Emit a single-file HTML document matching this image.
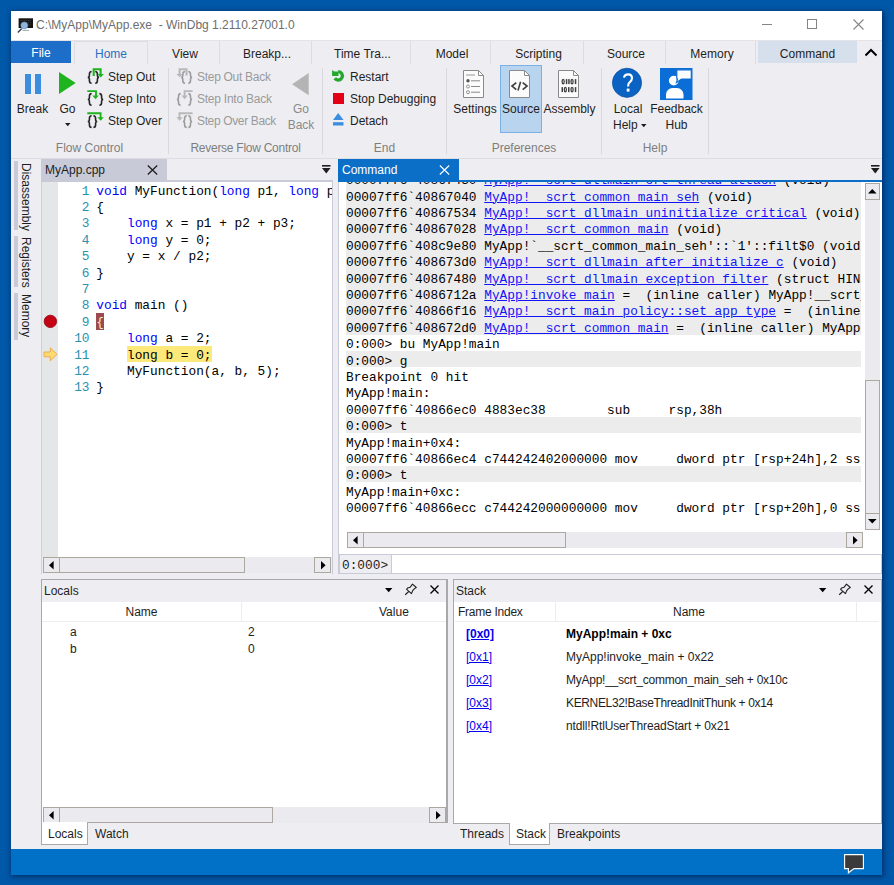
<!DOCTYPE html>
<html><head><meta charset="utf-8">
<style>
*{margin:0;padding:0;box-sizing:border-box}
html,body{width:894px;height:885px;overflow:hidden;background:#0058a8;font-family:"Liberation Sans",sans-serif;font-size:12px;color:#1e1e1e}
.a{position:absolute}
.t{position:absolute;white-space:pre;line-height:14px}
.c{text-align:center}
.mono{font-family:"Liberation Mono",monospace;font-size:12.8px}
.sep{position:absolute;width:1px;background:#d8d8de}
.tabsep{position:absolute;top:41px;width:1px;height:23px;background:#dcdce2}
.gl{position:absolute;top:140.7px;color:#7e7e7e;white-space:pre;line-height:14px;text-align:center}
svg{position:absolute;overflow:visible}
.cl{position:absolute;left:0;width:518px;height:16.4px}
.ct{position:absolute;left:0;top:2.6px;line-height:16.4px;white-space:pre;font-family:"Liberation Mono",monospace;font-size:12.8px;color:#000}
.ct u{color:#1414f8;text-decoration-thickness:1px;text-underline-offset:1px}

</style></head><body>
<div class="a" style="left:11px;top:11px;width:871px;height:864px;background:#eeeef2;box-shadow:1px 1px 5px 1px rgba(0,20,60,.55)"></div>
<!-- title bar -->
<div class="a" style="left:11px;top:11px;width:871px;height:29px;background:#fff"></div>
<div class="a" style="left:11px;top:40px;width:871px;height:1px;background:#e4e4e8"></div>
<div class="t" style="left:36px;top:18px;color:#6e6e6e">C:\MyApp\MyApp.exe&nbsp; - WinDbg 1.2110.27001.0</div>
<svg style="left:14px;top:14px" width="24" height="24"><rect x="4.6" y="4.3" width="14.4" height="9.7" fill="#141414"/><path d="M6.5 6.5H17M6.5 8.7H17M6.5 10.9H17" stroke="#555" stroke-width=".6" stroke-dasharray="1.2 .6"/><path d="M8.5 16.4H15" stroke="#9aa" stroke-width="1"/><path d="M3.8 18.5L7.8 14.5" stroke="#3a4a5a" stroke-width="1.6"/><circle cx="10.3" cy="11.4" r="3.5" fill="#8fb6dc" stroke="#6a8fb4" stroke-width=".6"/></svg>
<!-- window controls -->
<div class="a" style="left:762px;top:24px;width:10px;height:1px;background:#858585"></div>
<div class="a" style="left:807px;top:19px;width:10px;height:10px;border:1px solid #858585"></div>
<svg style="left:853px;top:19px" width="11" height="11"><path d="M0.5 0.5L10.5 10.5M10.5 0.5L0.5 10.5" stroke="#858585" stroke-width="1.1"/></svg>
<!-- ribbon tabs -->
<div class="a" style="left:11px;top:41px;width:60px;height:22px;background:#1c6ec8"></div>
<div class="t c" style="left:11px;top:46px;width:60px;color:#fff">File</div>
<div class="a" style="left:74px;top:41px;width:74px;height:23px;background:#eeeef2;border:1px solid #dcdce2;border-bottom:none"></div>
<div class="t c" style="left:74px;top:47px;width:74px;color:#2b6fc0">Home</div>
<div class="tabsep" style="left:219px"></div>
<div class="tabsep" style="left:311px"></div>
<div class="tabsep" style="left:410px"></div>
<div class="tabsep" style="left:490px"></div>
<div class="tabsep" style="left:583px"></div>
<div class="tabsep" style="left:665px"></div>
<div class="tabsep" style="left:755px"></div>
<div class="t c" style="left:149.5px;top:47px;width:71px">View</div>
<div class="t c" style="left:221.5px;top:47px;width:91px">Breakp...</div>
<div class="t c" style="left:313.5px;top:47px;width:98px">Time Tra...</div>
<div class="t c" style="left:412.5px;top:47px;width:79px">Model</div>
<div class="t c" style="left:492.5px;top:47px;width:92px">Scripting</div>
<div class="t c" style="left:585.5px;top:47px;width:81px">Source</div>
<div class="t c" style="left:667.5px;top:47px;width:89px">Memory</div>
<div class="a" style="left:758px;top:41px;width:99px;height:22px;background:#d6e0ec"></div>
<div class="t c" style="left:758px;top:47px;width:99px">Command</div>
<svg style="left:864px;top:48px" width="14" height="9"><path d="M1.5 7.5L7 2L12.5 7.5" stroke="#000" stroke-width="2" fill="none"/></svg>
<!-- ribbon body -->
<!-- Flow control -->
<div class="a" style="left:25px;top:74px;width:6px;height:20px;background:#3b8de0"></div>
<div class="a" style="left:35px;top:74px;width:6px;height:20px;background:#3b8de0"></div>
<div class="t c" style="left:12px;top:102px;width:41px">Break</div>
<svg style="left:59px;top:72px" width="17" height="22"><path d="M0 0L16.7 11L0 22Z" fill="#1fb31f"/></svg>
<div class="t c" style="left:55px;top:102px;width:25px">Go</div>
<svg style="left:65px;top:123px" width="6" height="4"><path d="M0 0H5.5L2.75 3.2Z" fill="#1e1e1e"/></svg>
<!-- step icons -->
<svg style="left:0;top:0" width="894" height="160"><path d="M91.6 71.5C89.6 71.5 89.39999999999999 72.5 89.39999999999999 74.2V75.8C89.39999999999999 76.8 88.8 77.3 87.8 77.35C88.8 77.4 89.39999999999999 77.9 89.39999999999999 78.9V80.5C89.39999999999999 82.2 89.6 83.2 91.6 83.2" stroke="#262626" stroke-width="1.6" fill="none"/><path d="M95.2 71.5C97.2 71.5 97.4 72.5 97.4 74.2V75.8C97.4 76.8 98.0 77.3 99.0 77.35C98.0 77.4 97.4 77.9 97.4 78.9V80.5C97.4 82.2 97.2 83.2 95.2 83.2" stroke="#262626" stroke-width="1.6" fill="none"/><path d="M93.7 76V69.2H100.6V74.5" stroke="#1fb31f" stroke-width="2.1" fill="none"/><path d="M97.4 74H103.9L100.65 77.4Z" fill="#1fb31f"/><path d="M91.6 93.6C89.6 93.6 89.39999999999999 94.6 89.39999999999999 96.3V97.89999999999999C89.39999999999999 98.89999999999999 88.8 99.39999999999999 87.8 99.44999999999999C88.8 99.5 89.39999999999999 100.0 89.39999999999999 101.0V102.6C89.39999999999999 104.3 89.6 105.3 91.6 105.3" stroke="#262626" stroke-width="1.6" fill="none"/><path d="M99.4 93.6C101.4 93.6 101.60000000000001 94.6 101.60000000000001 96.3V97.89999999999999C101.60000000000001 98.89999999999999 102.2 99.39999999999999 103.2 99.44999999999999C102.2 99.5 101.60000000000001 100.0 101.60000000000001 101.0V102.6C101.60000000000001 104.3 101.4 105.3 99.4 105.3" stroke="#262626" stroke-width="1.6" fill="none"/><path d="M87.3 91.1H96V96.5" stroke="#1fb31f" stroke-width="1.9" fill="none"/><path d="M92.3 95.6H98.8L95.55 99.3Z" fill="#1fb31f"/><path d="M91.6 115.7C89.6 115.7 89.39999999999999 116.7 89.39999999999999 118.4V120.0C89.39999999999999 121.0 88.8 121.5 87.8 121.55C88.8 121.60000000000001 89.39999999999999 122.10000000000001 89.39999999999999 123.10000000000001V124.7C89.39999999999999 126.4 89.6 127.4 91.6 127.4" stroke="#262626" stroke-width="1.6" fill="none"/><path d="M93.4 115.7C95.4 115.7 95.60000000000001 116.7 95.60000000000001 118.4V120.0C95.60000000000001 121.0 96.2 121.5 97.2 121.55C96.2 121.60000000000001 95.60000000000001 122.10000000000001 95.60000000000001 123.10000000000001V124.7C95.60000000000001 126.4 95.4 127.4 93.4 127.4" stroke="#262626" stroke-width="1.6" fill="none"/><path d="M87.3 113.2H100.6V118" stroke="#1fb31f" stroke-width="1.9" fill="none"/><path d="M97.4 117.3H103.9L100.65 120.8Z" fill="#1fb31f"/></svg>
<div class="t" style="left:108px;top:70px">Step Out</div>
<div class="t" style="left:108px;top:92px">Step Into</div>
<div class="t" style="left:108px;top:114px">Step Over</div>
<div class="gl" style="left:11px;width:157px">Flow Control</div>
<div class="sep" style="left:168px;top:68px;height:86px"></div>
<!-- reverse flow -->
<svg style="left:0;top:0" width="894" height="160"><path d="M185 71.5C183 71.5 182.8 72.5 182.8 74.2V75.8C182.8 76.8 182.2 77.3 181.2 77.35C182.2 77.4 182.8 77.9 182.8 78.9V80.5C182.8 82.2 183 83.2 185 83.2" stroke="#9c9c9c" stroke-width="1.6" fill="none"/><path d="M188.3 71.5C190.3 71.5 190.5 72.5 190.5 74.2V75.8C190.5 76.8 191.10000000000002 77.3 192.10000000000002 77.35C191.10000000000002 77.4 190.5 77.9 190.5 78.9V80.5C190.5 82.2 190.3 83.2 188.3 83.2" stroke="#9c9c9c" stroke-width="1.6" fill="none"/><path d="M186.5 75.5V69.2H179.6V74.5" stroke="#b8b8b8" stroke-width="2.1" fill="none"/><path d="M176.4 74H182.9L179.65 77.2Z" fill="#b8b8b8"/><path d="M180.7 93.6C178.7 93.6 178.5 94.6 178.5 96.3V97.89999999999999C178.5 98.89999999999999 177.89999999999998 99.39999999999999 176.89999999999998 99.44999999999999C177.89999999999998 99.5 178.5 100.0 178.5 101.0V102.6C178.5 104.3 178.7 105.3 180.7 105.3" stroke="#9c9c9c" stroke-width="1.6" fill="none"/><path d="M188.3 93.6C190.3 93.6 190.5 94.6 190.5 96.3V97.89999999999999C190.5 98.89999999999999 191.10000000000002 99.39999999999999 192.10000000000002 99.44999999999999C191.10000000000002 99.5 190.5 100.0 190.5 101.0V102.6C190.5 104.3 190.3 105.3 188.3 105.3" stroke="#9c9c9c" stroke-width="1.6" fill="none"/><path d="M192.6 91.1H184.6V96.5" stroke="#b8b8b8" stroke-width="1.9" fill="none"/><path d="M181.4 95.6H187.8L184.6 99.3Z" fill="#b8b8b8"/><path d="M186.8 115.7C184.8 115.7 184.60000000000002 116.7 184.60000000000002 118.4V120.0C184.60000000000002 121.0 184.0 121.5 183.0 121.55C184.0 121.60000000000001 184.60000000000002 122.10000000000001 184.60000000000002 123.10000000000001V124.7C184.60000000000002 126.4 184.8 127.4 186.8 127.4" stroke="#9c9c9c" stroke-width="1.6" fill="none"/><path d="M188.3 115.7C190.3 115.7 190.5 116.7 190.5 118.4V120.0C190.5 121.0 191.10000000000002 121.5 192.10000000000002 121.55C191.10000000000002 121.60000000000001 190.5 122.10000000000001 190.5 123.10000000000001V124.7C190.5 126.4 190.3 127.4 188.3 127.4" stroke="#9c9c9c" stroke-width="1.6" fill="none"/><path d="M192.6 113.2H179.5V118" stroke="#b8b8b8" stroke-width="1.9" fill="none"/><path d="M176.4 117.3H182.7L179.55 120.8Z" fill="#b8b8b8"/></svg>
<div class="t" style="left:197px;top:70px;color:#9a9a9a;letter-spacing:-0.29px">Step Out Back</div>
<div class="t" style="left:197px;top:92px;color:#9a9a9a;letter-spacing:-0.24px">Step Into Back</div>
<div class="t" style="left:197px;top:114px;color:#9a9a9a;letter-spacing:-0.36px">Step Over Back</div>
<svg style="left:292px;top:73px" width="17" height="23"><path d="M16.7 0V22.3L0 11.15Z" fill="#b4b4b4"/></svg>
<div class="t c" style="left:285px;top:102px;width:32px;color:#8a8a8a">Go</div>
<div class="t c" style="left:285px;top:118px;width:32px;color:#8a8a8a">Back</div>
<div class="gl" style="left:169px;width:153px;letter-spacing:-0.26px">Reverse Flow Control</div>
<div class="sep" style="left:322px;top:68px;height:86px"></div>
<!-- End -->
<svg style="left:331px;top:70px" width="14" height="13"><path d="M3.76 8.31A4.2 4.2 0 1 0 7.2 1.7" stroke="#22a82a" stroke-width="3.3" fill="none"/><path d="M1.1 0L3.2 1.6H7.5V5.9H1.1Z" fill="#22a82a"/></svg>
<div class="a" style="left:333px;top:93px;width:10.5px;height:10.5px;background:#e30016"></div>
<svg style="left:333px;top:113px" width="11" height="13"><path d="M5.2 0L10.5 7H0Z" fill="#3b8de0"/><rect x="0" y="9.2" width="10.5" height="3.3" fill="#3b8de0"/></svg>
<div class="t" style="left:350px;top:70px">Restart</div>
<div class="t" style="left:350px;top:92px">Stop Debugging</div>
<div class="t" style="left:350px;top:114px">Detach</div>
<div class="gl" style="left:323px;width:123px">End</div>
<div class="sep" style="left:446px;top:68px;height:86px"></div>
<!-- Preferences -->
<div class="a" style="left:500px;top:65px;width:42px;height:68px;background:#b9d4ee;border:1px solid #7ab0e4"></div>
<svg style="left:463px;top:70px" width="22" height="29"><path d="M0.5 0.5H15.5L20.5 5.5V27.5H0.5Z" fill="#fbfbfb" stroke="#8a8a8a"/><path d="M15.5 0.5V5.5H20.5" fill="none" stroke="#8a8a8a"/><path d="M3 5H12" stroke="#9a9a9a"/><circle cx="5" cy="10.8" r="1.7" fill="#555"/><path d="M8 10.8H17" stroke="#888"/><circle cx="5" cy="16.5" r="1.5" fill="none" stroke="#888" stroke-width=".9"/><path d="M8 16.5H17" stroke="#888"/><circle cx="5" cy="22.2" r="1.5" fill="none" stroke="#888" stroke-width=".9"/><path d="M8 22.2H17" stroke="#888"/></svg>
<svg style="left:509px;top:70px" width="22" height="29"><path d="M0.5 0.5H15.5L20.5 5.5V27.5H0.5Z" fill="#fbfbfb" stroke="#8a8a8a"/><path d="M15.5 0.5V5.5H20.5" fill="none" stroke="#8a8a8a"/><path d="M7.3 12.6L3 16.1L7.3 19.6M13.7 12.6L18 16.1L13.7 19.6" transform="translate(0,0)" fill="none" stroke="#404040" stroke-width="1.7"/><path d="M11.6 11.8L9 20.4" stroke="#404040" stroke-width="1.6"/></svg>
<svg style="left:558px;top:70px" width="22" height="29"><path d="M0.5 0.5H15.5L20.5 5.5V27.5H0.5Z" fill="#fbfbfb" stroke="#8a8a8a"/><path d="M15.5 0.5V5.5H20.5" fill="none" stroke="#8a8a8a"/><ellipse cx="5.15" cy="11.55" rx="1.05" ry="2.2" fill="none" stroke="#404040" stroke-width="1.3"/><rect x="7.8" y="9.1" width="1.5" height="5" fill="#404040"/><rect x="10.2" y="9.1" width="1.5" height="5" fill="#404040"/><ellipse cx="14.05" cy="11.55" rx="1.05" ry="2.2" fill="none" stroke="#404040" stroke-width="1.3"/><rect x="16.8" y="9.1" width="1.5" height="5" fill="#404040"/><rect x="3.5" y="17.1" width="1.5" height="5" fill="#404040"/><ellipse cx="7.35" cy="19.55" rx="1.05" ry="2.2" fill="none" stroke="#404040" stroke-width="1.3"/><rect x="10.0" y="17.1" width="1.5" height="5" fill="#404040"/><ellipse cx="14.05" cy="19.55" rx="1.05" ry="2.2" fill="none" stroke="#404040" stroke-width="1.3"/><rect x="16.8" y="17.1" width="1.5" height="5" fill="#404040"/></svg>
<div class="t c" style="left:450px;top:102px;width:50px">Settings</div>
<div class="t c" style="left:500px;top:102px;width:42px">Source</div>
<div class="t c" style="left:542px;top:102px;width:55px">Assembly</div>
<div class="gl" style="left:447px;width:154px">Preferences</div>
<div class="sep" style="left:601px;top:68px;height:86px"></div>
<!-- Help -->
<svg style="left:612px;top:68px" width="31" height="31"><circle cx="15" cy="14.8" r="14.6" fill="#0a62c2" stroke="#0a4f9c" stroke-width="0.7"/><path d="M12 9.6C12.4 7.4 14.2 6.4 16.1 6.4C18.6 6.4 20 8 20 10.2C20 12.4 18.6 13.4 17.4 14.5C16.4 15.4 16.1 16.4 16.1 18.6" fill="none" stroke="#fff" stroke-width="2.1"/><rect x="14.7" y="20.6" width="2.8" height="3" fill="#fff"/></svg>
<svg style="left:660px;top:68px" width="33" height="32"><rect width="32.5" height="32" fill="#0a6ed6"/><circle cx="13.8" cy="12.6" r="5.6" fill="#fff" stroke="#0a6ed6" stroke-width="1.4"/><path d="M16.8 1.8H31.3V11H21.5L16.5 14.5L17.5 11H16.8Z" fill="#fff" stroke="#0a6ed6" stroke-width="1.2"/><path d="M6 30.5V26.5A6.5 6.5 0 0 1 12.5 20H17A6.5 6.5 0 0 1 23.5 26.5V30.5Z" fill="#fff"/></svg>
<div class="t c" style="left:603px;top:102px;width:50px">Local</div>
<div class="t" style="left:613px;top:118px">Help</div>
<svg style="left:641px;top:124px" width="6" height="4"><path d="M0 0H5.5L2.75 3.2Z" fill="#1e1e1e"/></svg>
<div class="t c" style="left:650px;top:102px;width:53px">Feedback</div>
<div class="t c" style="left:650px;top:118px;width:53px">Hub</div>
<div class="gl" style="left:602px;width:106px">Help</div>
<div class="sep" style="left:708px;top:68px;height:86px"></div>

<div class="a" style="left:11px;top:158px;width:871px;height:1px;background:#dcdce2"></div>

<!-- left sidebar -->
<div class="a" style="left:14px;top:161px;width:3.5px;height:69px;background:#c9cad8"></div>
<div class="a" style="left:14px;top:236px;width:3.5px;height:51px;background:#c9cad8"></div>
<div class="a" style="left:14px;top:293px;width:3.5px;height:47px;background:#c9cad8"></div>
<div class="t" style="left:19px;top:163px;transform-origin:0 0;transform:translate(14px,0) rotate(90deg)">Disassembly</div>
<div class="t" style="left:19px;top:237px;transform-origin:0 0;transform:translate(14px,0) rotate(90deg)">Registers</div>
<div class="t" style="left:19px;top:294px;transform-origin:0 0;transform:translate(14px,0) rotate(90deg)">Memory</div>
<!-- code pane -->
<div class="a" style="left:41px;top:180px;width:292px;height:2px;background:#c9cad8"></div>
<div class="a" style="left:41px;top:159px;width:126px;height:23px;background:#c9cad8"></div>
<div class="t" style="left:45px;top:163px">MyApp.cpp</div>
<svg style="left:147px;top:165px" width="11" height="10"><path d="M0.8 0.5L10.2 9.5M10.2 0.5L0.8 9.5" stroke="#1e1e1e" stroke-width="1.3"/></svg>
<svg style="left:322px;top:165px" width="9" height="9"><rect x="0" y="0" width="8.5" height="1.6" fill="#1e1e1e"/><path d="M0 3H8.5L4.25 8.5Z" fill="#1e1e1e"/></svg>
<div class="a" style="left:41px;top:182px;width:17px;height:375px;background:#e5e6e8;border-left:1px solid #cfd0dc"></div>
<div class="a" style="left:58px;top:182px;width:274px;height:375px;background:#fff;overflow:hidden">
 <div style="position:absolute;left:38.3px;top:131px;width:7.7px;height:17px;background:#9c4a4e"></div>
 <div style="position:absolute;left:69px;top:164px;width:84.6px;height:16.4px;background:#fde87a"></div>
 <div class="mono" style="position:absolute;left:0;top:1.6px;width:31.5px;line-height:16.4px;white-space:pre;text-align:right;color:#2b91af">1
2
3
4
5
6
7
8
9
10
11
12
13</div>
 <div class="mono" style="position:absolute;left:38.3px;top:1.6px;line-height:16.4px;white-space:pre;color:#000"><span style="color:#0000ff">void</span> MyFunction(<span style="color:#0000ff">long</span> p1, <span style="color:#0000ff">long</span> p2, <span style="color:#0000ff">long</span> p3)
{
    <span style="color:#0000ff">long</span> x = p1 + p2 + p3;
    <span style="color:#0000ff">long</span> y = 0;
    y = x / p2;
}

<span style="color:#0000ff">void</span> main ()
<span style="color:#f4e8c8">{</span>
    <span style="color:#0000ff">long</span> a = 2;
    long b = 0;
    MyFunction(a, b, 5);
}</div>
</div>
<div class="a" style="left:332px;top:182px;width:1px;height:392px;background:#c9cad8"></div>
<svg style="left:43px;top:315px" width="15" height="14"><circle cx="7.4" cy="6.4" r="6.2" fill="#c40012" stroke="#8a0010" stroke-width="0.8"/></svg>
<svg style="left:43px;top:347px" width="15" height="15"><path d="M1.1 5H7.3V0.8L14 7.3L7.3 13.9V9.8H1.1Z" fill="#fcdc72" stroke="#eaa640" stroke-width="0.9" stroke-linejoin="round"/></svg>

<!-- code hscroll -->
<div class="a" style="left:41px;top:557px;width:1px;height:17px;background:#cfd0dc"></div>
<div class="a" style="left:43px;top:557px;width:288px;height:16px;background:#ebebef"></div>
<div class="a" style="left:43px;top:557px;width:202px;height:16px;border:1px solid #aca89f"></div>
<div class="a" style="left:59px;top:557px;width:1px;height:16px;background:#aca89f"></div>
<svg style="left:49px;top:561px" width="5" height="9"><path d="M4.6 0V8.6L0 4.3Z" fill="#000"/></svg>
<div class="a" style="left:314px;top:557px;width:17px;height:16px;border:1px solid #aca89f"></div>
<svg style="left:321px;top:561px" width="5" height="9"><path d="M0 0V8.6L4.6 4.3Z" fill="#000"/></svg>
<!-- command pane -->
<div class="a" style="left:338px;top:159px;width:121px;height:23px;background:#0b6fc7"></div>
<div class="a" style="left:338px;top:180px;width:544px;height:2px;background:#0b6fc7"></div>
<div class="t" style="left:342px;top:163px;color:#fff">Command</div>
<svg style="left:439px;top:165px" width="11" height="10"><path d="M0.8 0.5L10.2 9.5M10.2 0.5L0.8 9.5" stroke="#fff" stroke-width="1.1"/></svg>
<svg style="left:871px;top:165px" width="9" height="9"><rect x="0" y="0" width="8.5" height="1.6" fill="#1e1e1e"/><path d="M0 3H8.5L4.25 8.5Z" fill="#1e1e1e"/></svg>
<div class="a" style="left:338px;top:182px;width:1px;height:392px;background:#c9cad8"></div>
<div class="a" style="left:339px;top:182px;width:543px;height:372px;background:#fff"></div>
<div class="a" style="left:346px;top:182px;width:515px;height:350px;overflow:hidden">
<div style="position:absolute;left:0;top:-11.3px;width:518px;height:164.0px;background:#ececec"></div>
<div style="position:absolute;left:0;top:169.1px;width:518px;height:16.4px;background:#ececec"></div>
<div style="position:absolute;left:0;top:234.7px;width:518px;height:16.4px;background:#ececec"></div>
<div style="position:absolute;left:0;top:283.9px;width:518px;height:16.4px;background:#ececec"></div>
<div class="cl" style="top:-11.3px"><div class="ct">00007ff6`40867430 <u>MyApp!  scrt dllmain crt thread attach</u> (void)</div></div>
<div class="cl" style="top:5.1px"><div class="ct">00007ff6`40867040 <u>MyApp!  scrt common main seh</u> (void)</div></div>
<div class="cl" style="top:21.5px"><div class="ct">00007ff6`40867534 <u>MyApp!  scrt dllmain uninitialize critical</u> (void)</div></div>
<div class="cl" style="top:37.9px"><div class="ct">00007ff6`40867028 <u>MyApp!  scrt common main</u> (void)</div></div>
<div class="cl" style="top:54.3px"><div class="ct">00007ff6`408c9e80 MyApp!`__scrt_common_main_seh'::`1'::filt$0 (void)</div></div>
<div class="cl" style="top:70.7px"><div class="ct">00007ff6`408673d0 <u>MyApp!  scrt dllmain after initialize c</u> (void)</div></div>
<div class="cl" style="top:87.1px"><div class="ct">00007ff6`40867480 <u>MyApp!  scrt dllmain exception filter</u> (struct HINSTANCE__ *, unsigned long)</div></div>
<div class="cl" style="top:103.5px"><div class="ct">00007ff6`4086712a <u>MyApp!invoke main</u> =  (inline caller) MyApp!__scrt_common_main_seh+10c</div></div>
<div class="cl" style="top:119.9px"><div class="ct">00007ff6`40866f16 <u>MyApp!  scrt main policy::set app type</u> =  (inline caller) MyApp!__scrt_common_main_seh+42</div></div>
<div class="cl" style="top:136.3px"><div class="ct">00007ff6`408672d0 <u>MyApp!  scrt common main</u> =  (inline caller) MyApp!mainCRTStartup+e</div></div>
<div class="cl" style="top:152.7px"><div class="ct">0:000&gt; bu MyApp!main</div></div>
<div class="cl" style="top:169.1px"><div class="ct">0:000&gt; g</div></div>
<div class="cl" style="top:185.5px"><div class="ct">Breakpoint 0 hit</div></div>
<div class="cl" style="top:201.9px"><div class="ct">MyApp!main:</div></div>
<div class="cl" style="top:218.3px"><div class="ct">00007ff6`40866ec0 4883ec38        sub     rsp,38h</div></div>
<div class="cl" style="top:234.7px"><div class="ct">0:000&gt; t</div></div>
<div class="cl" style="top:251.1px"><div class="ct">MyApp!main+0x4:</div></div>
<div class="cl" style="top:267.5px"><div class="ct">00007ff6`40866ec4 c744242402000000 mov     dword ptr [rsp+24h],2 ss:000000a5`6e4ff8f4=00000000</div></div>
<div class="cl" style="top:283.9px"><div class="ct">0:000&gt; t</div></div>
<div class="cl" style="top:300.3px"><div class="ct">MyApp!main+0xc:</div></div>
<div class="cl" style="top:316.7px"><div class="ct">00007ff6`40866ecc c744242000000000 mov     dword ptr [rsp+20h],0 ss:000000a5`6e4ff8f0=00000000</div></div>
</div>
<!-- cmd scrolls -->
<div class="a" style="left:347px;top:532px;width:516px;height:16px;background:#ebebef"></div>
<div class="a" style="left:347px;top:532px;width:219px;height:16px;border:1px solid #aca89f"></div>
<div class="a" style="left:363px;top:532px;width:1px;height:16px;background:#aca89f"></div>
<svg style="left:353px;top:536px" width="5" height="9"><path d="M4.6 0V8.6L0 4.3Z" fill="#000"/></svg>
<div class="a" style="left:846px;top:532px;width:17px;height:16px;border:1px solid #aca89f"></div>
<svg style="left:853px;top:536px" width="5" height="9"><path d="M0 0V8.6L4.6 4.3Z" fill="#000"/></svg>
<div class="a" style="left:865px;top:183px;width:15px;height:347px;background:#ebebef"></div>
<div class="a" style="left:865px;top:183px;width:15px;height:17px;border:1px solid #aca89f"></div>
<svg style="left:868px;top:189px" width="9" height="5"><path d="M0 4.6H8.6L4.3 0Z" fill="#000"/></svg>
<div class="a" style="left:865px;top:380px;width:15px;height:134px;border:1px solid #aca89f"></div>
<div class="a" style="left:865px;top:513px;width:15px;height:17px;border:1px solid #aca89f"></div>
<svg style="left:868px;top:519px" width="9" height="5"><path d="M0 0H8.6L4.3 4.6Z" fill="#000"/></svg>
<!-- input -->
<div class="a" style="left:339px;top:554px;width:543px;height:20px;background:#fff;border:1px solid #c9cad8"></div>
<div class="a" style="left:339px;top:554px;width:53px;height:20px;background:#eeeef2;border:1px solid #c9cad8"></div>
<div class="mono" style="position:absolute;left:342px;top:557.5px;line-height:16.4px;white-space:pre">0:000&gt;</div>

<!-- locals pane -->
<div class="a" style="left:41px;top:579px;width:407px;height:244px;background:#fff;border:1px solid #a9a9ad;border-right:2px solid #a9a9ad"></div>
<div class="a" style="left:42px;top:580px;width:404px;height:22px;background:#eeeef2"></div>
<div class="t" style="left:44px;top:584px">Locals</div>
<svg style="left:385px;top:588px" width="8" height="5"><path d="M0 0H7.4L3.7 4.2Z" fill="#000"/></svg>
<svg style="left:404px;top:584px" width="18" height="16"><path d="M8.5 0.2L12.3 3.5L10.5 4.6L8.7 6.6L7.5 9.6L2.6 5.3L3.5 4.1L6.2 3.2Z" fill="none" stroke="#1e1e1e" stroke-width="1.1" stroke-linejoin="round"/><path d="M4.9 7.4L1.2 10.8" stroke="#1e1e1e" stroke-width="1.2"/></svg>
<svg style="left:430px;top:585px" width="9" height="9"><path d="M0.5 0.5L8.5 8.5M8.5 0.5L0.5 8.5" stroke="#000" stroke-width="1.3"/></svg>
<div class="a" style="left:42px;top:621px;width:404px;height:1px;background:#ededf0"></div>
<div class="a" style="left:241px;top:602px;width:1px;height:19px;background:#ededf0"></div>
<div class="t c" style="left:42px;top:605px;width:199px">Name</div>
<div class="t" style="left:379px;top:605px">Value</div>
<div class="t" style="left:70px;top:625px">a</div>
<div class="t" style="left:70px;top:642px">b</div>
<div class="t" style="left:248px;top:625px">2</div>
<div class="t" style="left:248px;top:642px">0</div>
<div class="a" style="left:43px;top:807px;width:403px;height:16px;background:#ebebef"></div>
<div class="a" style="left:43px;top:807px;width:230px;height:16px;border:1px solid #aca89f"></div>
<div class="a" style="left:59px;top:807px;width:1px;height:16px;background:#aca89f"></div>
<svg style="left:49px;top:811px" width="5" height="9"><path d="M4.6 0V8.6L0 4.3Z" fill="#000"/></svg>
<div class="a" style="left:429px;top:807px;width:17px;height:16px;border:1px solid #aca89f"></div>
<svg style="left:436px;top:811px" width="5" height="9"><path d="M0 0V8.6L4.6 4.3Z" fill="#000"/></svg>
<div class="a" style="left:41px;top:822px;width:47px;height:23px;background:#fff;border:1px solid #a9a9ad;border-top:none"></div>
<div class="t" style="left:48px;top:827px">Locals</div>
<div class="t" style="left:95px;top:827px">Watch</div>
<!-- stack pane -->
<div class="a" style="left:453px;top:579px;width:429px;height:245px;background:#fff;border:1px solid #a9a9ad;border-right:1px solid #b4b4b8"></div>
<div class="a" style="left:454px;top:580px;width:427px;height:22px;background:#eeeef2"></div>
<div class="t" style="left:456px;top:584px">Stack</div>
<svg style="left:819px;top:588px" width="8" height="5"><path d="M0 0H7.4L3.7 4.2Z" fill="#000"/></svg>
<svg style="left:838px;top:584px" width="18" height="16"><path d="M8.5 0.2L12.3 3.5L10.5 4.6L8.7 6.6L7.5 9.6L2.6 5.3L3.5 4.1L6.2 3.2Z" fill="none" stroke="#1e1e1e" stroke-width="1.1" stroke-linejoin="round"/><path d="M4.9 7.4L1.2 10.8" stroke="#1e1e1e" stroke-width="1.2"/></svg>
<svg style="left:864px;top:585px" width="9" height="9"><path d="M0.5 0.5L8.5 8.5M8.5 0.5L0.5 8.5" stroke="#000" stroke-width="1.3"/></svg>
<div class="a" style="left:455px;top:621px;width:424px;height:1px;background:#ededf0"></div>
<div class="a" style="left:555px;top:602px;width:1px;height:19px;background:#ededf0"></div>
<div class="a" style="left:856px;top:602px;width:1px;height:19px;background:#ededf0"></div>
<div class="t" style="left:458px;top:605px;letter-spacing:-0.25px">Frame Index</div>
<div class="t c" style="left:556px;top:605px;width:266px">Name</div>
<div class="t" style="left:466px;top:627px;color:#0000ee;font-weight:bold;text-decoration:underline">[0x0]</div>
<div class="t" style="left:566px;top:627px;font-weight:bold;color:#000">MyApp!main + 0xc</div>
<div class="t" style="left:466px;top:650px;color:#0000ee;text-decoration:underline">[0x1]</div>
<div class="t" style="left:566px;top:650px">MyApp!invoke_main + 0x22</div>
<div class="t" style="left:466px;top:673px;color:#0000ee;text-decoration:underline">[0x2]</div>
<div class="t" style="left:566px;top:673px;letter-spacing:-0.25px">MyApp!__scrt_common_main_seh + 0x10c</div>
<div class="t" style="left:466px;top:696px;color:#0000ee;text-decoration:underline">[0x3]</div>
<div class="t" style="left:566px;top:696px;letter-spacing:-0.35px">KERNEL32!BaseThreadInitThunk + 0x14</div>
<div class="t" style="left:466px;top:719px;color:#0000ee;text-decoration:underline">[0x4]</div>
<div class="t" style="left:566px;top:719px;letter-spacing:-0.15px">ntdll!RtlUserThreadStart + 0x21</div>
<div class="a" style="left:509px;top:823px;width:41px;height:22px;background:#fff;border:1px solid #a9a9ad;border-top:none"></div>
<div class="t" style="left:460px;top:827px">Threads</div>
<div class="t" style="left:516px;top:827px">Stack</div>
<div class="t" style="left:557px;top:827px">Breakpoints</div>
<!-- status bar -->
<div class="a" style="left:11px;top:849px;width:871px;height:26px;background:#0071c6"></div>
<svg style="left:844px;top:854px" width="21" height="20"><path d="M0.6 0.6H19.4V14.6H10L4.4 18.8V14.6H0.6Z" fill="#3b3b3b" stroke="#fff" stroke-width="1.1" stroke-linejoin="miter"/></svg>
</body></html>
